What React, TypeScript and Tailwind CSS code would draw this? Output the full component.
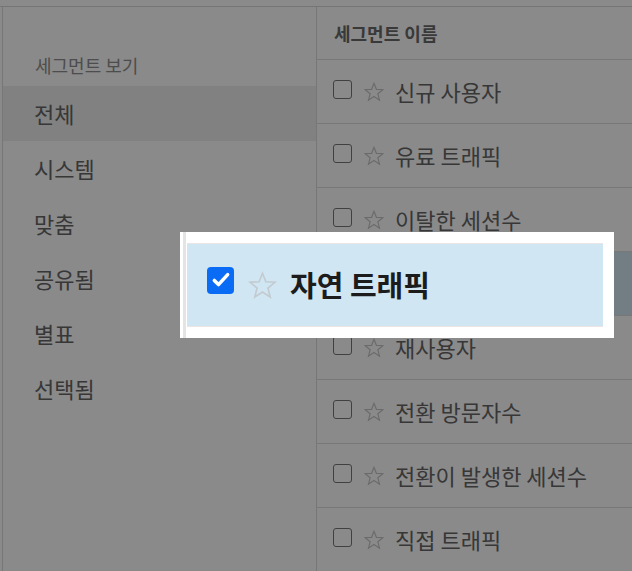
import React from "react";

const views = ["전체", "시스템", "맞춤", "공유됨", "별표", "선택됨"];

const segments = [
	"신규 사용자",
	"유료 트래픽",
	"이탈한 세션수",
	"자연 트래픽",
	"재사용자",
	"전환 방문자수",
	"전환이 발생한 세션수",
	"직접 트래픽",
];

function Star({ size, color }: { size: number; color: string }) {
	return (
		<svg width={size} height={size} viewBox="0 0 24 24" fill="none" stroke={color} strokeWidth="1.3" strokeLinejoin="miter">
			<path d="M12 2.5l2.6 6.6 7 .4-5.4 4.5 1.8 6.9L12 17l-6 3.9 1.8-6.9-5.4-4.5 7-.4z" />
		</svg>
	);
}

export default function App() {
	return (
		<div
			className="relative w-[632px] h-[571px] overflow-hidden bg-white"
			style={{ fontFamily: '"Noto Sans CJK KR", "Noto Sans", sans-serif' }}
		>
			<div className="h-[7px] border-b border-[#d8d8d8]" />
			<div className="flex h-[564px] pl-[2px]">
				{/* left: segment views */}
				<div className="w-[315px] border-x border-[#dcdcdc] pt-[45px]">
					<p className="pl-[32px] text-[18px] leading-[26px] text-[#8e8e8e]">세그먼트 보기</p>
					<div className="mt-[8px]">
						{views.map((v, i) => (
							<div
								key={v}
								className={`h-[55px] flex items-center pl-[31px] text-[22px] text-[#666] ${i === 0 ? "bg-[#eeeeee]" : ""}`}
							>
								{v}
							</div>
						))}
					</div>
				</div>

				{/* right: segment list */}
				<div className="flex-1">
					<div className="h-[53px] flex items-center pl-[17px] border-b border-[#dedede] text-[18px] font-bold text-[#6a6a6a]">
						세그먼트 이름
					</div>
					{segments.map((s, i) => (
						<div
							key={s}
							className={`h-[64px] flex items-center pl-[16px] border-b border-[#dedede] ${i === 3 ? "bg-[#d2e8f4]" : ""}`}
						>
							<span className="w-[19px] h-[19px] rounded-[3px] border-[1.5px] border-[#777] bg-white mb-[4px]" />
							<span className="ml-[11px] mr-[10px]">
								<Star size={22} color="#c6c6c6" />
							</span>
							<span className="text-[22px] text-[#666]">{s}</span>
						</div>
					))}
				</div>
			</div>

			{/* dim layer */}
			<div className="absolute inset-0 bg-black/[0.46]" />

			{/* zoomed row callout */}
			<div className="absolute left-[180px] top-[232px] w-[434px] h-[106px] bg-white flex pl-[3px]">
				<div className="w-[3px] h-full bg-[#e4e4e4]" />
				<div className="flex-1 pl-[1px] pr-[11px] py-[11px]">
					<div className="h-full flex items-center pl-[20px] bg-[#d0e7f3] border-y border-[#ebe4e4]">
						<span className="w-[27px] h-[27px] rounded-[4px] bg-[#0a6cf5] flex items-center justify-center mb-[10px]">
							<svg width="20" height="20" viewBox="0 0 24 24" fill="none" stroke="white" strokeWidth="4.2" strokeLinecap="round" strokeLinejoin="round">
								<path d="M4 12.5l5 5L20 5.5" />
							</svg>
						</span>
						<span className="ml-[13px] mr-[12px]">
							<Star size={31} color="#c3cbd0" />
						</span>
						<span className="text-[29px] font-bold text-[#1c1c1c]">자연 트래픽</span>
					</div>
				</div>
			</div>
		</div>
	);
}
